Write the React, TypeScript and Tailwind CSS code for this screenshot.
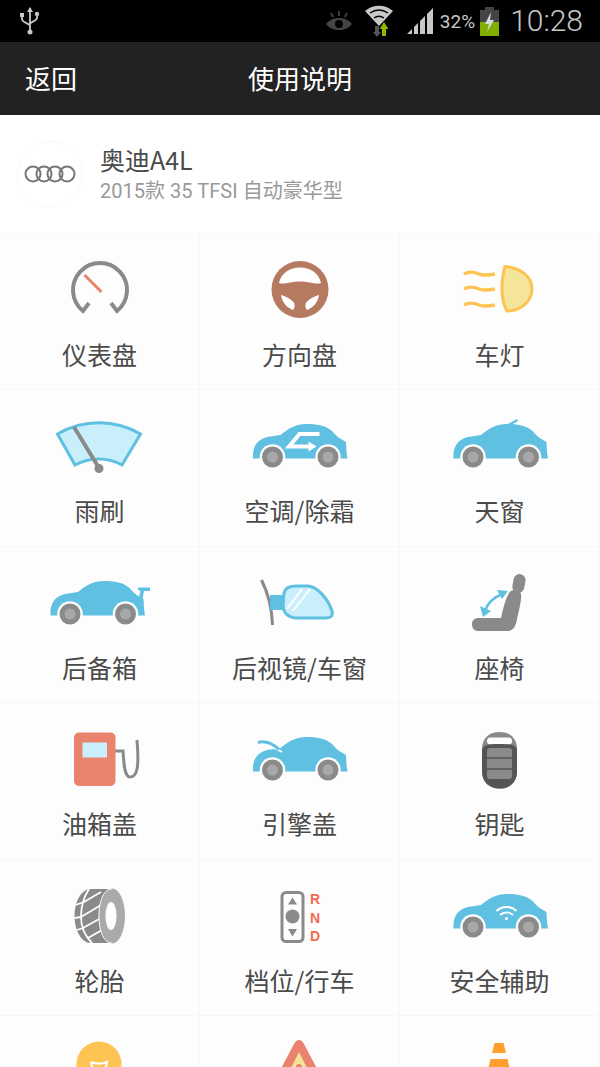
import React from "react";

const BLUE = "#5fc0e2";
const PALE = "#c9effd";
const GREY = "#8a8a8a";
const AMBER = "#fdc453";
const CORAL = "#e9836d";

function Car({ dx = 0, children }: { dx?: number; children?: React.ReactNode }) {
  return (
    <g transform={`translate(${dx} 0)`}>
      {children}
      <path
        fill={BLUE}
        d="M3 46.500 C2.500 37 5 30 14 26 C20 24 26 24 30.500 23 C36 18.500 44 12 57 12 C69 12 76 14 82 19 C85 22 88 26 91 27 L96 30 L96.500 40 L97.500 46.500 Z"
      />
      {[22.500, 78].map((cx) => (
        <g key={cx}>
          <circle cx={cx} cy="45" r="12.800" fill="#fdfdfd" />
          <circle cx={cx} cy="45" r="10.500" fill={GREY} />
          <circle cx={cx} cy="45" r="5.500" fill="#a8a8a8" />
        </g>
      ))}
    </g>
  );
}

const icons: Record<string, React.ReactNode> = {
  gauge: (
    <>
      <path d="M39 47 L33 55 A27 27 0 1 1 67 55 L61 47" fill="none" stroke={GREY} strokeWidth="4" />
      <path d="M34.500 19 L51.500 36" stroke={CORAL} strokeWidth="3" />
    </>
  ),
  wheel: (
    <>
      <circle cx="50" cy="33.500" r="28.500" fill="#b57a60" />
      <path fill="#fff" d="M29 27 C31 17 40 11.500 50 11.500 C60 11.500 69 17 71 27 C66 29 60 25.500 50 25.500 C40 25.500 34 29 29 27 Z" />
      <path fill="#fff" d="M31 39 C36 40 44 45 44.500 48 C45 51 44 53 43 54 C37 52 32 46 31 39 Z" />
      <path fill="#fff" d="M69 39 C64 40 56 45 55.500 48 C55 51 56 53 57 54 C63 52 68 46 69 39 Z" />
    </>
  ),
  lamp: (
    <>
      <path d="M55 10.500 C70 12 82 20 82 33 C82 46 70 55 57 55 C53 48 52 40 52 33 C52 24 53 17 55 10.500 Z" fill="#f5e59a" stroke={AMBER} strokeWidth="3" />
      {[18, 33, 49].map((y) => (
        <path key={y} d={`M14 ${y} C20 ${y - 3} 24 ${y - 2} 29 ${y} C34 ${y + 2} 40 ${y + 1} 45 ${y}`} fill="none" stroke={AMBER} strokeWidth="3.500" />
      ))}
    </>
  ),
  wiper: (
    <>
      <path d="M7.500 22 C33 7 65 7 90.500 22 L72 53 C58 45 40 45 25 53 Z" fill={PALE} stroke={BLUE} strokeWidth="3" />
      <path d="M24 15 L49 56" stroke={GREY} strokeWidth="4" />
      <circle cx="49" cy="56.500" r="4.500" fill={GREY} />
    </>
  ),
  ac: (
    <>
      <Car />
      <path d="M69.500 22 L49.500 22 L39 34.500 L60 34.500" fill="none" stroke="#fff" strokeWidth="4" />
      <path d="M58.500 29.500 L66.500 34.500 L58.500 39.500 Z" fill="#fff" />
    </>
  ),
  sunroof: (
    <Car dx={0.500}>
      <path d="M53 16 L67 8" stroke={BLUE} strokeWidth="2.500" />
    </Car>
  ),
  trunk: (
    <>
      <Car dx={-2.500} />
      <path d="M88 18.500 L100 18.500 L100 22 L94 22 L92.500 30 L89 28 L90.500 22 L88 21 Z" fill={BLUE} />
    </>
  ),
  mirror: (
    <>
      <path d="M11.500 11 C18 24 22 40 22.500 56" fill="none" stroke={GREY} strokeWidth="3" />
      <rect x="20" y="26" width="14" height="15" fill={BLUE} />
      <path d="M34 24 C35 19 39 17 46 17 L58 17 C68 18 78 30 82 42 C83 47 81 49 76 49 L45 49 C38 48 34 44 33 38 Z" fill={PALE} stroke={BLUE} strokeWidth="3" />
      <path d="M37 40 L52 20 M43 42 L60 20" stroke="#fff" strokeWidth="2" />
    </>
  ),
  seat: (
    <>
      <rect x="63" y="5" width="12" height="19" rx="6" fill={GREY} transform="rotate(10 69 14)" />
      <path fill={GREY} d="M22 55 C22 51 25 49 29 49 L51 49 C53 40 55 31 59 24 C61 20 70 20 71 25 C72 29 69 42 67 50 C66 57 63 62 58 62 L28 62 C24 62 22 59 22 55 Z" />
      <path d="M35 42 C38 33 44 28 53 25" fill="none" stroke={BLUE} strokeWidth="2.500" />
      <path d="M47 21 L58 22 L52 30 Z M30 37 L33 48 L41 42 Z" fill={BLUE} />
    </>
  ),
  pump: (
    <>
      <path d="M65 26 L73 26 C74 38 74 52 80 52 C88 52 89 40 87 15" fill="none" stroke={GREY} strokeWidth="3" />
      <rect x="24" y="7.500" width="41.500" height="53.500" rx="5" fill={CORAL} />
      <rect x="32.500" y="17.500" width="24.500" height="15" fill={PALE} />
    </>
  ),
  hood: (
    <>
      <Car />
      <path d="M6 21 C14 19 24 22 32 27" fill="none" stroke="#fdfdfd" strokeWidth="2" />
      <path d="M8 17.500 C15 15.500 23 19 29 24.500" fill="none" stroke={BLUE} strokeWidth="3" />
    </>
  ),
  key: (
    <>
      <path d="M32 24 C32 13 39 7 49.500 7 C60 7 67 13 67 24 L67 46 C67 57 60 63.500 49.500 63.500 C39 63.500 32 57 32 46 Z" fill={GREY} />
      <rect x="37" y="12.500" width="25" height="7" rx="3.500" fill="#fdfdfd" />
      <path d="M32 24 C34 20 38 19 49.500 19 C61 19 65 20 67 24 L67 46 C67 57 60 63.500 49.500 63.500 C39 63.500 32 57 32 46 Z" fill="#555" />
      <rect x="37" y="23" width="25" height="31" rx="3" fill={GREY} />
      <path d="M37 33 L62 33 M37 44 L62 44" stroke="#555" strokeWidth="1.500" />
    </>
  ),
  tire: (
    <>
      <path d="M41 7 L62 7 L62 61 L41 61 C31 61 24.500 48 24.500 34 C24.500 20 31 7 41 7 Z" fill={GREY} />
      <path
        d="M39 7 C33 16 31 26 31 35 C31 45 35 54 42 61 M34 20 L51 10 M31 35 L51 23 M33 46 L51 36 M38 56 L52 48 M25.500 23 L34 20 M24.500 36 L31 35 M27 48 L33 46"
        fill="none"
        stroke="#fff"
        strokeWidth="1.800"
      />
      <ellipse cx="62" cy="34" rx="13" ry="27.500" fill="#aaa" />
      <path d="M49 34 C49 18 54 7 62 7" fill="none" stroke="#fff" strokeWidth="1" />
      <path d="M49 34 C49 50 54 61 62 61" fill="none" stroke="#fff" strokeWidth="1" />
      <ellipse cx="61" cy="34" rx="5.500" ry="14" fill="#fff" />
    </>
  ),
  gear: (
    <>
      <rect x="32" y="10.500" width="21" height="49" rx="4" fill="none" stroke={GREY} strokeWidth="3" />
      <circle cx="42.500" cy="34.500" r="7" fill={GREY} />
      <path d="M42.500 15.500 L47 22.500 L38 22.500 Z M42.500 54.500 L47 47 L38 47 Z" fill={GREY} />
      <g fill="#f26b4e" fontFamily="'Liberation Sans', sans-serif" fontWeight="700" fontSize="14" textAnchor="middle">
        <text x="65" y="22">R</text>
        <text x="65" y="40.500">N</text>
        <text x="65" y="59">D</text>
      </g>
    </>
  ),
  wifi: (
    <>
      <Car dx={0.500} />
      <path d="M46.500 29 C52 23.500 61 23.500 66.500 29 M50 33 C54 29.500 59 29.500 63 33" fill="none" stroke="#fff" strokeWidth="2" />
      <circle cx="56.500" cy="36.500" r="1.600" fill="#fff" />
    </>
  ),
  sign: (
    <>
      <circle cx="49" cy="26" r="22.500" fill={AMBER} />
      <path d="M41 24 C46 26 52 26 57 24 L55 34 M41 24 L43 34" fill="none" stroke="#fff" strokeWidth="2.200" />
    </>
  ),
  triangle: (
    <>
      <path d="M49 2 C51 2 53 4 54 6 L72 40 L26 40 L44 6 C45 4 47 2 49 2 Z" fill={CORAL} />
      <path d="M49 14 L62 40 L36 40 Z" fill="#f5e59a" />
      <circle cx="49" cy="29" r="3" fill={CORAL} />
    </>
  ),
  cone: (
    <>
      <path d="M44.500 5 L53.500 5 L56 15 L42 15 Z" fill="#ff9f2e" />
      <path d="M40.500 21 L57.500 21 L62 40 L36 40 Z" fill="#ff9f2e" />
    </>
  ),
};

const items = [
  { label: "仪表盘", icon: "gauge" },
  { label: "方向盘", icon: "wheel" },
  { label: "车灯", icon: "lamp" },
  { label: "雨刷", icon: "wiper" },
  { label: "空调/除霜", icon: "ac" },
  { label: "天窗", icon: "sunroof" },
  { label: "后备箱", icon: "trunk" },
  { label: "后视镜/车窗", icon: "mirror" },
  { label: "座椅", icon: "seat" },
  { label: "油箱盖", icon: "pump" },
  { label: "引擎盖", icon: "hood" },
  { label: "钥匙", icon: "key" },
  { label: "轮胎", icon: "tire" },
  { label: "档位/行车", icon: "gear" },
  { label: "安全辅助", icon: "wifi" },
  { label: "", icon: "sign" },
  { label: "", icon: "triangle" },
  { label: "", icon: "cone" },
];

function StatusBar() {
  return (
    <div className="flex h-[42px] items-center bg-black pl-[20px] pr-[17px] text-[#c8c8c8]">
      <svg width="20" height="28" viewBox="0 0 20 28">
        <path d="M10 1 L10 25 M2 9 L2 12 C2 16 10 16 10 19 M17 8 L17 11 C17 14 10 15 10 17" fill="none" stroke="#c8c8c8" strokeWidth="1.800" />
        <circle cx="10" cy="25" r="2.500" fill="#c8c8c8" />
        <path d="M10 0 L13 5 L7 5 Z" fill="#c8c8c8" />
        <rect x="0" y="6" width="4" height="4" fill="#c8c8c8" />
        <circle cx="17" cy="7" r="2.200" fill="#c8c8c8" />
      </svg>
      <svg className="ml-auto" width="28" height="22" viewBox="0 0 28 22">
        <path d="M1 14 C7 6 21 6 27 14 C21 22 7 22 1 14 Z" fill="#444" />
        <circle cx="14" cy="14" r="4" fill="#000" />
        <path d="M14 1 L14 6 M6 3 L8 7 M22 3 L20 7" stroke="#444" strokeWidth="1.800" />
      </svg>
      <svg className="ml-[11px]" width="30" height="32" viewBox="0 0 30 32">
        <path d="M1 6 C9 -1 21 -1 29 6 L15 21 Z" fill="#c8c8c8" />
        <path d="M6 8 C12 4 18 4 24 8 M10 13 C13 11 17 11 20 13" stroke="#000" strokeWidth="1.500" fill="none" />
        <path d="M11 21 L15 21 L15 27 L17 27 L13 32 L9 27 L11 27 Z" fill="#555" />
        <path d="M18 31 L22 31 L22 24 L24.500 24 L20 17 L15.500 24 L18 24 Z" fill="#8db600" />
      </svg>
      <svg className="ml-[12px]" width="28" height="28" viewBox="0 0 28 28">
        <path d="M1 27 L6 22 L6 27 Z M8 27 L8 20 L12 16 L12 27 Z M14 27 L14 14 L19 9 L19 27 Z M21 27 L21 7 L27 1 L27 27 Z" fill="#c8c8c8" />
      </svg>
      <span className="ml-[6px] font-['Roboto'] text-[19px] leading-none">32%</span>
      <svg className="ml-[5px]" width="19" height="29" viewBox="0 0 19 29">
        <rect x="5" y="0" width="9" height="3" fill="#444" />
        <rect x="0" y="3" width="19" height="26" fill="#444" />
        <rect x="0" y="15" width="19" height="14" fill="#7fb000" />
        <path d="M11 5 L5 17 L9 17 L7 25 L14 13 L10 13 Z" fill="#d8d8d8" />
      </svg>
      <span className="ml-[11px] font-['Roboto'] text-[30px] font-light leading-none">10:28</span>
    </div>
  );
}

export default function App() {
  return (
    <div className="h-[1067px] w-[600px] overflow-hidden bg-white font-['Noto_Sans_CJK_SC',sans-serif]">
      <StatusBar />
      <div className="flex h-[73px] items-center justify-between bg-[#222] pb-[2px] pl-[25px] text-white">
        <span className="w-[52px] text-[26px]">返回</span>
        <span className="text-[26px]">使用说明</span>
        <span className="w-[77px]" />
      </div>
      <div className="flex h-[119px] items-center border-b border-[#f7f7f7] pl-[17px]">
        <div className="flex h-[66px] w-[66px] items-center justify-center rounded-full border border-[#f9f9f9]">
          <svg width="52" height="20" viewBox="0 0 52 20">
            {[9, 20, 31, 43].map((cx) => (
              <circle key={cx} cx={cx} cy="10" r="7.500" fill="none" stroke="#777" strokeWidth="2" />
            ))}
          </svg>
        </div>
        <div className="ml-[17px] mt-[-1px] flex flex-col">
          <span className="text-[25px] leading-[34px] text-[#4a4a4a]">奥迪A4L</span>
          <span className="font-['Roboto','Noto_Sans_CJK_SC',sans-serif] text-[20px] leading-[30px] text-[#999]">
            2015款 35 TFSI 自动豪华型
          </span>
        </div>
      </div>
      <div className="grid grid-cols-3 bg-[#fdfdfd]">
        {items.map((item) => (
          <div key={item.icon} className="flex h-[156.4px] flex-col items-center border-r border-b border-[#f7f7f7] pt-[22px]">
            <svg width="100" height="70" viewBox="0 0 100 70">
              {icons[item.icon]}
            </svg>
            {item.label && <span className="mt-[10px] text-[25px] leading-[36px] text-[#4a4a4a]">{item.label}</span>}
          </div>
        ))}
      </div>
    </div>
  );
}
